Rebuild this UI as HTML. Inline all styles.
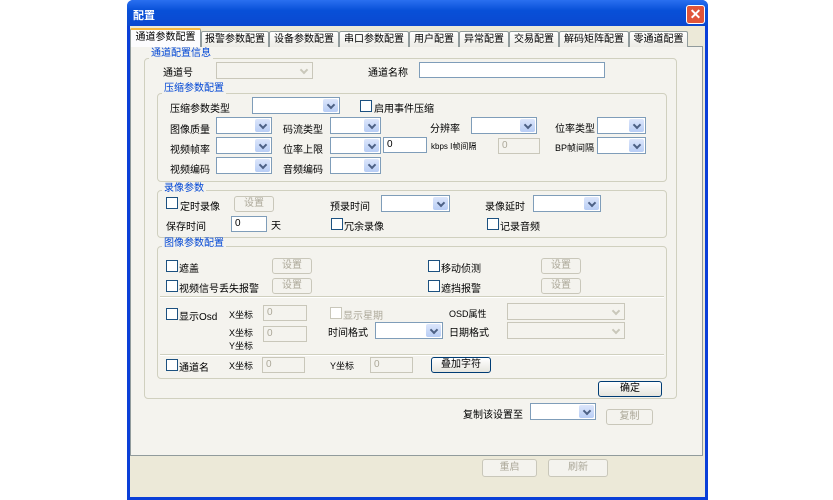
<!DOCTYPE html>
<html><head><meta charset="utf-8"><style>
*{box-sizing:border-box;margin:0;padding:0}
body{width:833px;height:500px;background:#fff;position:relative;overflow:hidden;font-family:"Liberation Sans","Noto Sans CJK SC","WenQuanYi Zen Hei",sans-serif;font-size:10px;color:#000}
.a{position:absolute}
.win{left:127px;top:0;width:581px;height:500px;background:#0a3fd8;border-radius:6px 6px 0 0}
.title{left:127px;top:0;width:581px;height:26px;background:linear-gradient(#2a6ff0,#0850d8 40%,#0a48d0);border-radius:6px 6px 0 0;color:#fff;font-weight:bold;font-size:11px;padding:7px 6px}
.client{left:130px;top:26px;width:575px;height:471px;background:#ece9d8}
.close{left:686px;top:5px;width:19px;height:19px;background:#e0553a;border:1px solid #fff;border-radius:3px;color:#fff;font-size:14px;line-height:16px;text-align:center;font-weight:bold}
.tab{top:31px;height:16px;border:1px solid #919b9c;border-bottom:none;background:linear-gradient(#fff,#ecebe5);text-align:center;line-height:15px;font-size:10px;border-radius:2px 2px 0 0;white-space:nowrap}
.tab.sel{top:28px;height:19px;background:#fcfcfe;border-top:2px solid #f5b83f;z-index:2}
.panel{left:130px;top:46px;width:573px;height:410px;border:1px solid #919b9c;background:#f4f3ee}
.grp{border:1px solid #d0d0bf;border-radius:4px}
.gt{color:#0046d5;background:#f4f3ee;padding:0 2px;font-size:10px;line-height:12px}
.cb{height:17px;background:#fff;border:1px solid #7f9db9}
.cb::after{content:"";position:absolute;right:1px;top:1px;width:15px;height:13px;background:linear-gradient(#dce6fb,#b8cdf5);border-radius:2px}
.cb::before{content:"";position:absolute;right:5px;top:4px;width:4px;height:4px;border-right:2px solid #4d6185;border-bottom:2px solid #4d6185;transform:rotate(45deg);z-index:1}
.cb.dis{background:#f4f3ee;border-color:#c9c7ba}
.cb.dis::after{background:#f4f3ee}
.cb.dis::before{border-color:#c9c7ba}
.in{height:16px;background:#fff;border:1px solid #7f9db9;padding-left:3px;line-height:14px;font-size:10px}
.in.dis{background:#f4f3ee;color:#aca899;border-color:#c9c7ba}
.ck{width:12px;height:12px;border:1px solid #1c5180;background:#fff}
.ck.dis{border-color:#c9c7ba}
.btn{height:16px;border:1px solid #c9c7ba;border-radius:3px;color:#aca899;text-align:center;line-height:14px;background:#f4f3ee}
.btn.on{border-color:#003c74;color:#000;background:linear-gradient(#fff,#e6e5de)}
.dl{color:#aca899}
.sep{height:2px;border-top:1px solid #d0d0bf;border-bottom:1px solid #fff}
</style></head><body>
<div class="a win"></div>
<div class="a title">配置</div>
<div class="a close">✕</div>
<div class="a client"></div>
<div class="a panel"></div>
<div class="a tab sel" style="left:130px;width:71px">通道参数配置</div>
<div class="a tab" style="left:201px;width:68px">报警参数配置</div>
<div class="a tab" style="left:269px;width:70px">设备参数配置</div>
<div class="a tab" style="left:339px;width:70px">串口参数配置</div>
<div class="a tab" style="left:409px;width:50px">用户配置</div>
<div class="a tab" style="left:459px;width:50px">异常配置</div>
<div class="a tab" style="left:509px;width:50px">交易配置</div>
<div class="a tab" style="left:559px;width:70px">解码矩阵配置</div>
<div class="a tab" style="left:629px;width:59px">零通道配置</div>

<div class="a grp" style="left:144px;top:58px;width:533px;height:341px"></div>
<div class="a gt" style="left:149px;top:48px">通道配置信息</div>
<div class="a" style="left:163px;top:64px">通道号</div>
<div class="a cb dis" style="left:216px;top:62px;width:97px"></div>
<div class="a" style="left:368px;top:64px">通道名称</div>
<div class="a in" style="left:419px;top:62px;width:186px"></div>

<div class="a grp" style="left:157px;top:93px;width:510px;height:89px"></div>
<div class="a gt" style="left:162px;top:83px">压缩参数配置</div>
<div class="a" style="left:170px;top:100px">压缩参数类型</div>
<div class="a cb" style="left:252px;top:97px;width:88px"></div>
<div class="a ck" style="left:360px;top:100px"></div><div class="a" style="left:374px;top:100px">启用事件压缩</div>

<div class="a" style="left:170px;top:121px">图像质量</div><div class="a cb" style="left:216px;top:117px;width:56px"></div>
<div class="a" style="left:283px;top:121px">码流类型</div><div class="a cb" style="left:330px;top:117px;width:51px"></div>
<div class="a" style="left:430px;top:120px">分辨率</div><div class="a cb" style="left:471px;top:117px;width:66px"></div>
<div class="a" style="left:555px;top:120px">位率类型</div><div class="a cb" style="left:597px;top:117px;width:49px"></div>

<div class="a" style="left:170px;top:141px">视频帧率</div><div class="a cb" style="left:216px;top:137px;width:56px"></div>
<div class="a" style="left:283px;top:141px">位率上限</div><div class="a cb" style="left:330px;top:137px;width:51px"></div>
<div class="a in" style="left:383px;top:137px;width:44px">0</div>
<div class="a" style="left:431px;top:141px;font-size:8px">kbps I帧间隔</div>
<div class="a in dis" style="left:498px;top:138px;width:42px">0</div>
<div class="a" style="left:555px;top:141px;font-size:9px">BP帧间隔</div><div class="a cb" style="left:597px;top:137px;width:49px"></div>

<div class="a" style="left:170px;top:161px">视频编码</div><div class="a cb" style="left:216px;top:157px;width:56px"></div>
<div class="a" style="left:283px;top:161px">音频编码</div><div class="a cb" style="left:330px;top:157px;width:51px"></div>

<div class="a grp" style="left:157px;top:190px;width:510px;height:48px"></div>
<div class="a gt" style="left:162px;top:183px">录像参数</div>
<div class="a ck" style="left:166px;top:197px"></div><div class="a" style="left:180px;top:198px">定时录像</div>
<div class="a btn" style="left:234px;top:196px;width:40px">设置</div>
<div class="a" style="left:330px;top:198px">预录时间</div><div class="a cb" style="left:381px;top:195px;width:69px"></div>
<div class="a" style="left:485px;top:198px">录像延时</div><div class="a cb" style="left:533px;top:195px;width:68px"></div>
<div class="a" style="left:166px;top:218px">保存时间</div>
<div class="a in" style="left:231px;top:216px;width:36px">0</div><div class="a" style="left:271px;top:217px">天</div>
<div class="a ck" style="left:331px;top:218px"></div><div class="a" style="left:344px;top:218px">冗余录像</div>
<div class="a ck" style="left:487px;top:218px"></div><div class="a" style="left:500px;top:218px">记录音频</div>

<div class="a grp" style="left:157px;top:246px;width:510px;height:133px"></div>
<div class="a gt" style="left:162px;top:238px">图像参数配置</div>
<div class="a ck" style="left:166px;top:260px"></div><div class="a" style="left:179px;top:260px">遮盖</div>
<div class="a btn" style="left:272px;top:258px;width:40px">设置</div>
<div class="a ck" style="left:428px;top:260px"></div><div class="a" style="left:441px;top:260px">移动侦测</div>
<div class="a btn" style="left:541px;top:258px;width:40px">设置</div>
<div class="a ck" style="left:166px;top:280px"></div><div class="a" style="left:179px;top:280px">视频信号丢失报警</div>
<div class="a btn" style="left:272px;top:278px;width:40px">设置</div>
<div class="a ck" style="left:428px;top:280px"></div><div class="a" style="left:441px;top:280px">遮挡报警</div>
<div class="a btn" style="left:541px;top:278px;width:40px">设置</div>
<div class="a sep" style="left:160px;top:296px;width:504px"></div>

<div class="a ck" style="left:166px;top:308px"></div><div class="a" style="left:179px;top:308px">显示Osd</div>
<div class="a" style="left:229px;top:308px;font-size:9px">X坐标</div>
<div class="a in dis" style="left:263px;top:305px;width:44px">0</div>
<div class="a ck dis" style="left:330px;top:307px"></div><div class="a dl" style="left:343px;top:307px">显示星期</div>
<div class="a" style="left:449px;top:307px;font-size:9px">OSD属性</div>
<div class="a cb dis" style="left:507px;top:303px;width:118px"></div>
<div class="a" style="left:229px;top:326px;font-size:9px">X坐标</div>
<div class="a" style="left:229px;top:339px;font-size:9px">Y坐标</div>
<div class="a in dis" style="left:263px;top:326px;width:44px">0</div>
<div class="a" style="left:328px;top:324px">时间格式</div><div class="a cb" style="left:375px;top:322px;width:68px"></div>
<div class="a" style="left:449px;top:324px">日期格式</div><div class="a cb dis" style="left:507px;top:322px;width:118px"></div>
<div class="a sep" style="left:160px;top:354px;width:504px"></div>

<div class="a ck" style="left:166px;top:359px"></div><div class="a" style="left:179px;top:359px">通道名</div>
<div class="a" style="left:229px;top:359px;font-size:9px">X坐标</div>
<div class="a in dis" style="left:262px;top:357px;width:43px">0</div>
<div class="a" style="left:330px;top:359px;font-size:9px">Y坐标</div>
<div class="a in dis" style="left:370px;top:357px;width:43px">0</div>
<div class="a btn on" style="left:431px;top:357px;width:60px">叠加字符</div>

<div class="a btn on" style="left:598px;top:381px;width:64px">确定</div>
<div class="a" style="left:463px;top:406px">复制该设置至</div>
<div class="a cb" style="left:530px;top:403px;width:66px"></div>
<div class="a btn" style="left:606px;top:409px;width:47px">复制</div>

<div class="a btn" style="left:482px;top:459px;width:55px;height:18px;line-height:16px">重启</div>
<div class="a btn" style="left:548px;top:459px;width:60px;height:18px;line-height:16px">刷新</div>
</body></html>
